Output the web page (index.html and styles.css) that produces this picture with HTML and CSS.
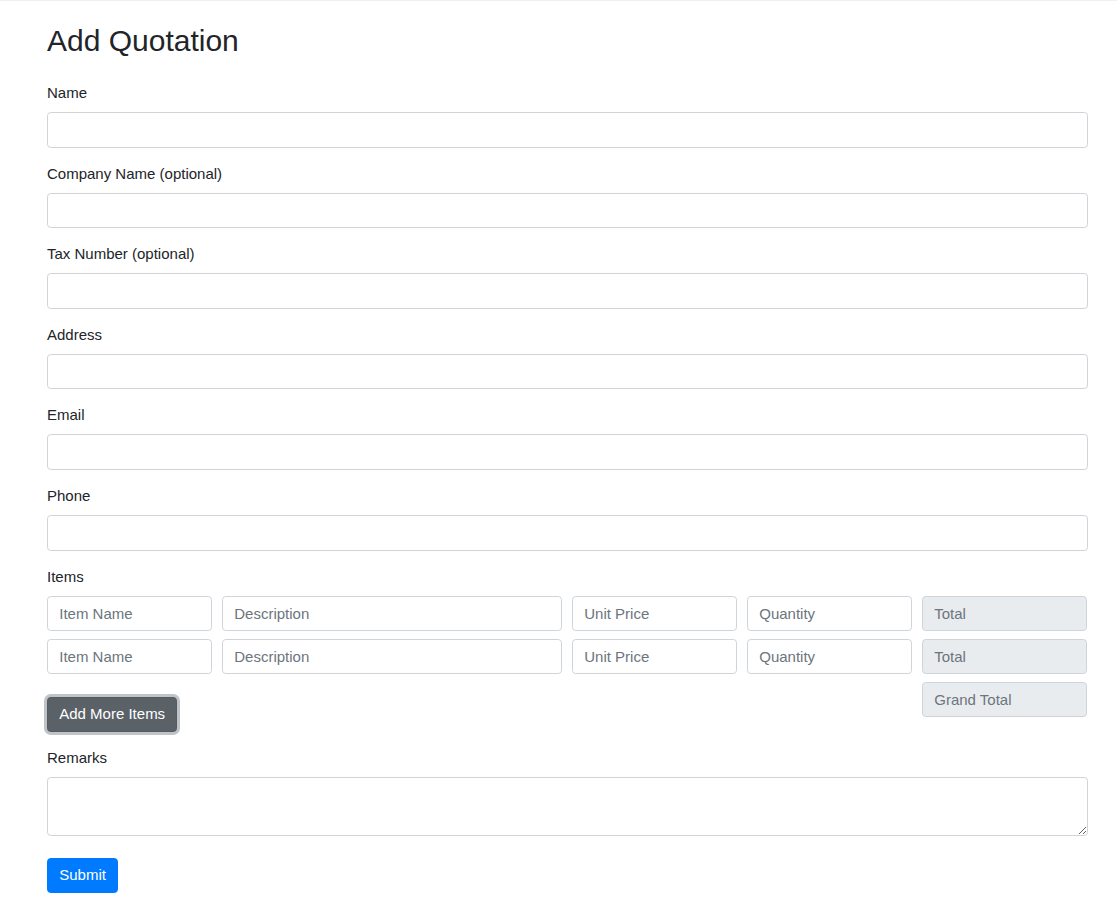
FILE: index.html
```html
<!DOCTYPE html>
<html lang="en">
<head>
<meta charset="utf-8">
<title>Add Quotation</title>
<link rel="stylesheet" href="styles.css">
</head>
<body>
<div class="topline"></div>
<main class="container">
  <h2 class="title">Add Quotation</h2>
  <form class="form">
    <div class="group">
      <label class="label">Name</label>
      <input class="control" type="text">
    </div>
    <div class="group">
      <label class="label">Company Name (optional)</label>
      <input class="control" type="text">
    </div>
    <div class="group">
      <label class="label">Tax Number (optional)</label>
      <input class="control" type="text">
    </div>
    <div class="group">
      <label class="label">Address</label>
      <input class="control" type="text">
    </div>
    <div class="group">
      <label class="label">Email</label>
      <input class="control" type="text">
    </div>
    <div class="group">
      <label class="label">Phone</label>
      <input class="control" type="text">
    </div>
    <div class="group items">
      <label class="label">Items</label>
      <div class="item-row">
        <input class="control span2" type="text" placeholder="Item Name">
        <input class="control span4" type="text" placeholder="Description">
        <input class="control span2" type="text" placeholder="Unit Price">
        <input class="control span2" type="text" placeholder="Quantity">
        <input class="control span2 readonly" type="text" placeholder="Total" readonly>
      </div>
      <div class="item-row">
        <input class="control span2" type="text" placeholder="Item Name">
        <input class="control span4" type="text" placeholder="Description">
        <input class="control span2" type="text" placeholder="Unit Price">
        <input class="control span2" type="text" placeholder="Quantity">
        <input class="control span2 readonly" type="text" placeholder="Total" readonly>
      </div>
      <div class="item-row total-row">
        <div class="span10"><button type="button" class="btn btn-secondary">Add More Items</button></div>
        <input class="control span2 readonly" type="text" placeholder="Grand Total" readonly>
      </div>
    </div>
    <div class="group remarks">
      <label class="label">Remarks</label>
      <textarea class="control textarea" rows="2"></textarea>
    </div>
    <button type="submit" class="btn btn-primary">Submit</button>
  </form>
</main>
</body>
</html>
```
FILE: styles.css
```css
* { box-sizing: border-box; }
html, body { margin: 0; padding: 0; background: #fff; }
body {
  font-family: "Liberation Sans", Arial, sans-serif;
  font-size: 15px;
  line-height: 1.5;
  color: #212529;
}
.topline { height: 1px; background: #eef0f2; }
.container { padding: 0 29px 0 47px; }
.title {
  font-size: 30px;
  font-weight: 400;
  line-height: 1.2;
  margin: 22px 0 23px;
}
.form { margin: 0; }
.group { margin-bottom: 15px; }
.label { display: inline-block; margin-bottom: 7.5px; }
.control {
  display: block;
  width: 100%;
  height: 35.6px;
  padding: 5.6px 11.25px;
  font-family: inherit;
  font-size: 15px;
  line-height: 1.5;
  color: #495057;
  background: #fff;
  border: 1px solid #ced4da;
  border-radius: 3.75px;
  outline: none;
}
.control::placeholder { color: #6c757d; opacity: 1; }
.control.readonly { background: #e9ecef; }
.textarea { height: 58.3px; resize: vertical; }
.item-row {
  display: grid;
  grid-template-columns: repeat(12, 77.5px);
  column-gap: 10px;
  margin-bottom: 7.5px;
}
.span2 { grid-column: span 2; }
.span4 { grid-column: span 4; }
.span10 { grid-column: span 10; }
.total-row { margin-bottom: 0; }
.total-row .btn { margin-top: 15px; }
.btn {
  display: inline-block;
  font-family: inherit;
  font-size: 15px;
  line-height: 1.5;
  padding: 5.6px 11.25px;
  border: 1px solid transparent;
  border-radius: 3.75px;
  color: #fff;
  cursor: pointer;
}
.btn-secondary {
  background: #5a6268;
  border-color: #545b62;
  box-shadow: 0 0 0 3px rgba(130, 138, 145, 0.5);
}
.btn-primary {
  background: #007bff;
  border-color: #007bff;
  margin-top: 7px;
}
.remarks { margin-bottom: 15px; }
```
